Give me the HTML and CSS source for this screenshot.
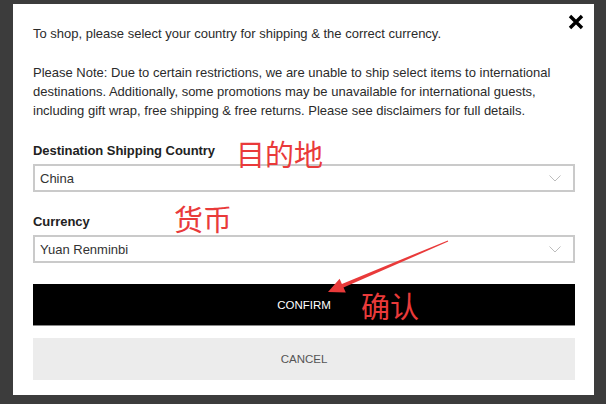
FILE: index.html
```html
<!DOCTYPE html>
<html lang="en">
<head>
<meta charset="utf-8">
<title>Select country</title>
<link rel="stylesheet" href="styles.css">
</head>
<body>
<div class="modal">
  <button class="close" aria-label="Close">
    <svg width="16" height="16" viewBox="0 0 16 16"><path d="M2 2 L14 14 M14 2 L2 14" stroke="#000" stroke-width="3.4" stroke-linecap="butt"/></svg>
  </button>
  <p class="intro">To shop, please select your country for shipping &amp; the correct currency.</p>
  <p class="note">Please Note: Due to certain restrictions, we are unable to ship select items to international destinations. Additionally, some promotions may be unavailable for international guests, including gift wrap, free shipping &amp; free returns. Please see disclaimers for full details.</p>
  <div class="field">
    <label class="label">Destination Shipping Country</label>
    <div class="select"><span>China</span><svg class="chev" width="12" height="7" viewBox="0 0 12 7"><polyline points="0.5,0.5 6,6 11.5,0.5" fill="none" stroke="#bdbdbd" stroke-width="1"/></svg></div>
  </div>
  <div class="field">
    <label class="label">Currency</label>
    <div class="select"><span>Yuan Renminbi</span><svg class="chev" width="12" height="7" viewBox="0 0 12 7"><polyline points="0.5,0.5 6,6 11.5,0.5" fill="none" stroke="#bdbdbd" stroke-width="1"/></svg></div>
  </div>
  <button class="btn btn-confirm">CONFIRM</button>
  <button class="btn btn-cancel">CANCEL</button>
</div>
<span class="note-cn cn-dest">目的地</span>
<span class="note-cn cn-cur">货币</span>
<span class="note-cn cn-ok">确认</span>
<svg class="arrow" width="606" height="404" viewBox="0 0 606 404">
  <polygon points="447.8,240.4 341.9,283.9 339.6,278.8 328,292 345.8,292.4 343.5,287.5 448.2,241.6" fill="#e93a3a"/>
</svg>
</body>
</html>
```
FILE: styles.css
```css
* { box-sizing: border-box; }
html, body { margin: 0; padding: 0; }
body {
  width: 606px;
  height: 404px;
  background: #3c3c3c;
  position: relative;
  overflow: hidden;
  font-family: "Liberation Sans", Arial, sans-serif;
}
.modal {
  position: relative;
  margin: 4px 0 0 13px;
  width: 581px;
  height: 391px;
  background: #fff;
  padding: 20px 19px 15px 20px;
  display: flex;
  flex-direction: column;
  color: #2b2b2b;
  font-size: 13px;
  line-height: 19px;
}
.close {
  position: absolute;
  top: 10px;
  right: 10px;
  width: 16px;
  height: 16px;
  padding: 0;
  border: 0;
  background: none;
  display: block;
}
.close svg { display: block; }
.intro { margin: 0; }
.note { margin: 20px 0 0; }
.field { margin-top: 21px; display: flex; flex-direction: column; }
.field + .field { margin-top: 20px; }
.label {
  font-weight: bold;
  color: #222;
  font-size: 13px;
  line-height: 19px;
  letter-spacing: -0.05px;
}
.select {
  margin-top: 4px;
  height: 28px;
  border: 2px solid #cacaca;
  display: flex;
  align-items: center;
  justify-content: space-between;
  padding: 0 12px 0 5px;
  color: #333;
}
.chev { display: block; }
.btn {
  display: block;
  width: 100%;
  height: 42px;
  border: 0;
  font-family: "Liberation Sans", Arial, sans-serif;
  font-size: 11.5px;
  padding: 0;
}
.btn-confirm {
  margin-top: 21px;
  background: #000;
  color: #fff;
  border-bottom: 1px solid #888;
}
.btn-cancel {
  margin-top: 12px;
  background: #ececec;
  color: #555;
}
.note-cn {
  position: absolute;
  color: #e93a3a;
  font-family: "Noto Sans CJK SC", sans-serif;
  font-size: 29px;
  line-height: 1;
  white-space: nowrap;
}
.cn-dest { left: 236px; top: 139px; }
.cn-cur { left: 174px; top: 204px; }
.cn-ok { left: 361px; top: 291px; }
.arrow { position: absolute; left: 0; top: 0; pointer-events: none; }
```
